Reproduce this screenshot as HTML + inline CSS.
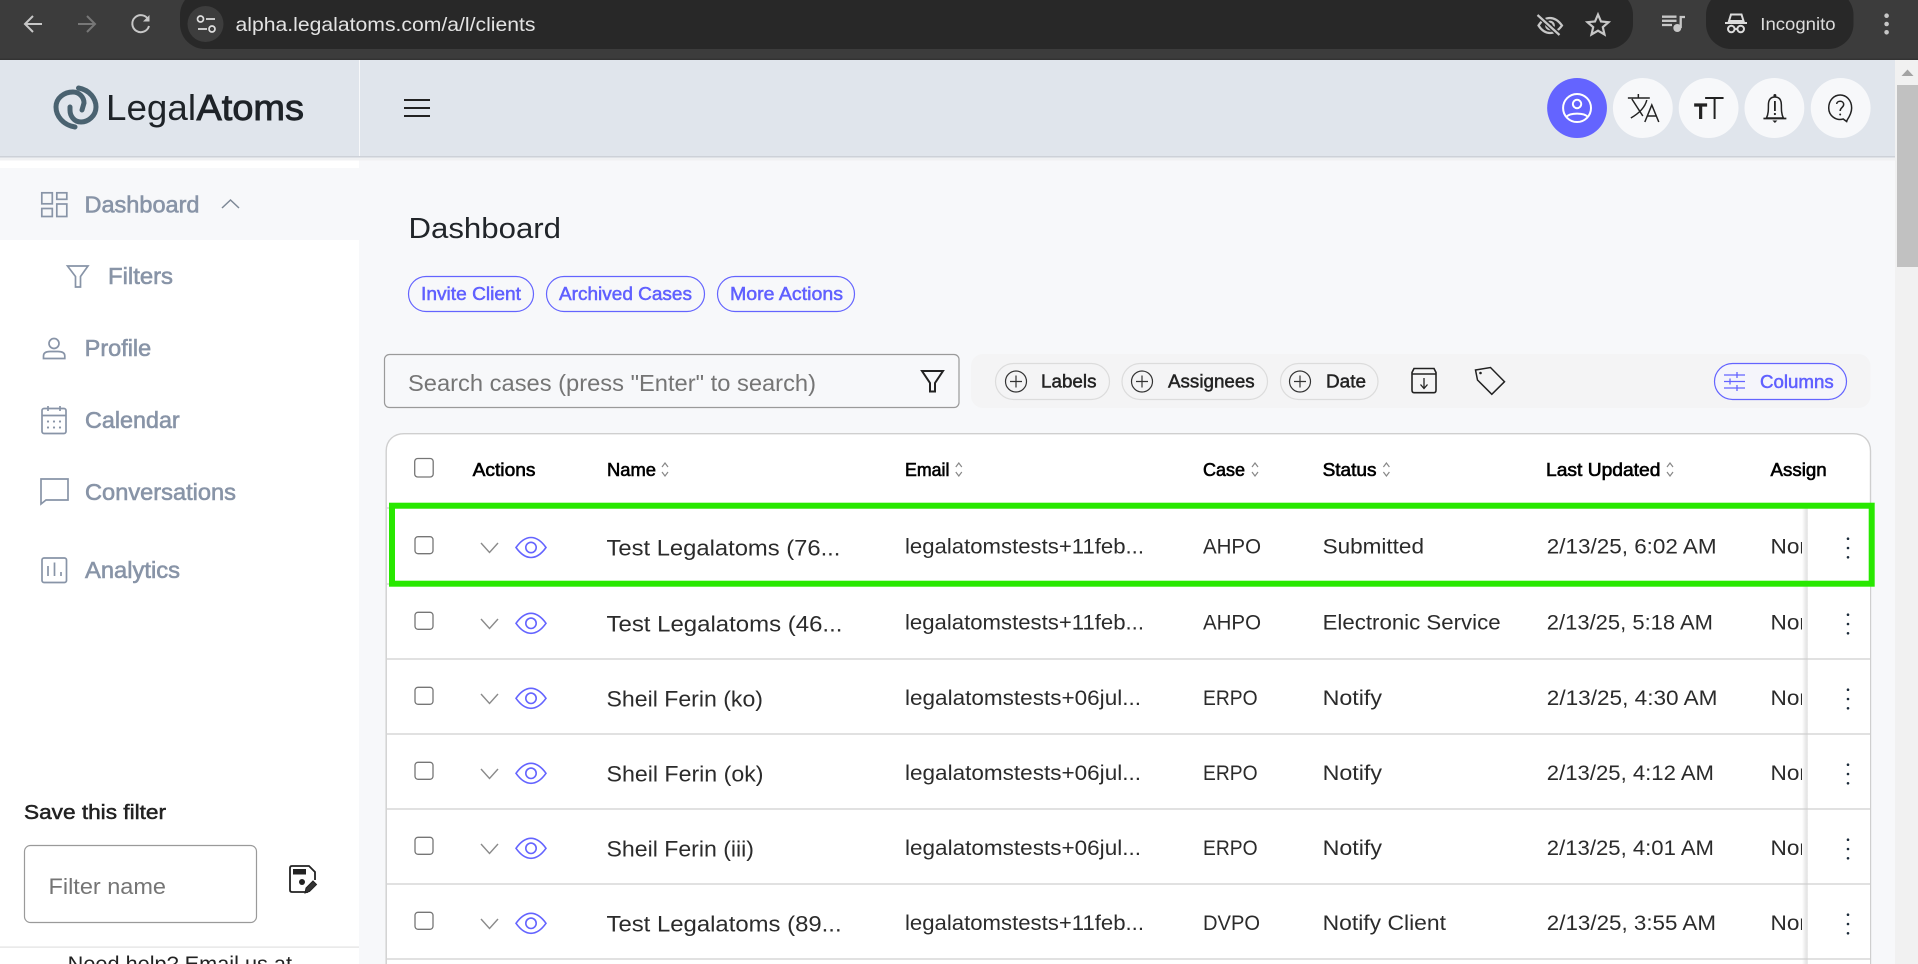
<!DOCTYPE html>
<html lang="en"><head><meta charset="utf-8"><title>LegalAtoms</title>
<style>
html,body{margin:0;padding:0;background:#f7f8fa;width:1918px;height:964px;overflow:hidden}
svg{display:block;font-family:"Liberation Sans",sans-serif}
.nav{font-size:23px;fill:#8894a7;stroke:#8894a7;stroke-width:.6}
.ic{fill:none;stroke:#8894a7;stroke-width:1.7}
.hd{font-size:18px;fill:#000;stroke:#000;stroke-width:.6}
.nm{font-size:22.5px;fill:#2b2b2b}
.tx{font-size:21px;fill:#2b2b2b}
.pu{font-size:18px;fill:#6060ff;stroke:#6060ff;stroke-width:.5}
.ch{font-size:18px;fill:#222;stroke:#222;stroke-width:.45}
.cb{fill:#fff;stroke:#767676;stroke-width:1.3}
.ln{stroke:#cfcfcf;stroke-width:1.3}
.srt{fill:none;stroke:#888;stroke-width:1.2}
.br{fill:none;stroke:#c7c7c7;stroke-width:2}
.k{fill:#1c2b3a}
</style></head><body>
<svg xmlns="http://www.w3.org/2000/svg" width="1918" height="964" viewBox="0 0 1918 964">
<defs>
<linearGradient id="sg" x1="0" x2="1" y1="0" y2="0"><stop offset="0" stop-color="#fff"/><stop offset=".75" stop-color="#e4e4e4"/><stop offset="1" stop-color="#ececec"/></linearGradient>
<g id="eye"><path d="M-15 0C-10-7-5-10 0-10C5-10 10-7 15 0C10 7 5 10 0 10C-5 10-10 7-15 0Z" fill="none" stroke="#6464ff" stroke-width="1.6"/><circle r="5.2" fill="none" stroke="#6464ff" stroke-width="1.6"/></g>
<path id="chev" d="M-8.5-5L0 4.5L8.500-5" fill="none" stroke="#8a8a8a" stroke-width="1.4"/>
<path id="sort" d="M-3 5L0 1L3 5M-3 10L0 14L3 10" class="srt"/>
<g id="plus"><circle r="10.5" fill="none" stroke="#333" stroke-width="1.2"/><path d="M-6 0H6M0-6V6" stroke="#333" stroke-width="1.2"/></g>
<g id="keb"><circle cy="-9.300" r="1.300" class="k"/><circle r="1.300" class="k"/><circle cy="9.300" r="1.300" class="k"/></g>
</defs>

<!-- browser chrome -->
<rect width="1918" height="60" fill="#3c3c3c"/>
<rect y="58.500" width="1918" height="1.500" fill="#333"/>
<rect x="180" y="-10" width="1453" height="59" rx="25" fill="#282828"/>
<path d="M42 24H25M33 16L25 24L33 32" class="br" stroke-width="2"/>
<path d="M78 24H95M87 16L95 24L87 32" fill="none" stroke="#777" stroke-width="2"/>
<path d="M148.500 20A8.500 8.500 0 1 0 149 26" class="br"/><path d="M149.500 15V21.500H143Z" fill="#c7c7c7"/>
<circle cx="205.500" cy="24" r="18" fill="#3d3d3d"/>
<circle cx="200.500" cy="19" r="3" fill="none" stroke="#dedede" stroke-width="1.700"/><path d="M206 19H215M198 29H207" stroke="#dedede" stroke-width="1.700"/><circle cx="212" cy="29" r="3" fill="none" stroke="#dedede" stroke-width="1.700"/>
<text x="235.500" y="31" font-size="19.500" fill="#e3e3e3" textLength="300" lengthAdjust="spacingAndGlyphs">alpha.legalatoms.com/a/l/clients</text>
<path d="M1538.500 25.500C1542 20 1546 18 1550 18C1554 18 1558 20 1562 25.500C1558 31 1554 33 1550 33C1546 33 1542 31 1538.500 25.500Z" fill="none" stroke="#c7c7c7" stroke-width="2.200"/><circle cx="1550" cy="25.500" r="3.800" fill="none" stroke="#c7c7c7" stroke-width="2.200"/><path d="M1538 15L1559.500 35" stroke="#282828" stroke-width="5"/><path d="M1537.500 15L1559.500 35" stroke="#c7c7c7" stroke-width="2.200"/>
<path d="M1598 14.500L1601 21.500L1608.500 22.200L1602.800 27.200L1604.500 34.500L1598 30.700L1591.500 34.500L1593.200 27.200L1587.500 22.200L1595 21.500Z" fill="none" stroke="#c7c7c7" stroke-width="2.200"/>
<path d="M1662 16.700H1676.500M1662 20.800H1676.500M1662 25H1672" stroke="#c7c7c7" stroke-width="2.300"/><path d="M1680.700 28V17H1685" fill="none" stroke="#c7c7c7" stroke-width="2.300"/><circle cx="1677.300" cy="28" r="4" fill="#c7c7c7"/>
<rect x="1706" y="-10" width="147.500" height="59" rx="25" fill="#282828"/>
<path d="M1731 14.500H1741.500L1743.500 21H1729ZM1725 23H1747" fill="none" stroke="#dcdcdc" stroke-width="2"/><circle cx="1731.300" cy="29" r="3.300" fill="none" stroke="#dcdcdc" stroke-width="2"/><circle cx="1740.700" cy="29" r="3.300" fill="none" stroke="#dcdcdc" stroke-width="2"/><path d="M1734.500 29H1737.500" stroke="#dcdcdc" stroke-width="2"/>
<text x="1760.300" y="30" font-size="17.500" fill="#dcdcdc" textLength="75.300" lengthAdjust="spacingAndGlyphs">Incognito</text>
<circle cx="1886.600" cy="15.700" r="2.300" fill="#c7c7c7"/><circle cx="1886.600" cy="24" r="2.300" fill="#c7c7c7"/><circle cx="1886.600" cy="32.300" r="2.300" fill="#c7c7c7"/>

<!-- backgrounds -->
<rect y="60" width="1895" height="904" fill="#f7f8fa"/>
<rect y="157" width="359" height="807" fill="#fff"/>
<rect y="168" width="359" height="72" fill="#f7f8fa"/>
<rect y="60" width="1895" height="96.500" fill="#e0e5ec"/>
<rect y="156" width="1895" height="1.500" fill="#cdd1d8"/>
<rect y="157.500" width="1895" height="3" fill="#f0f1f3"/>
<rect x="359" y="60" width="1" height="96" fill="#f7f8fa"/>
<rect x="1895" y="60" width="23" height="904" fill="#f1f1f1"/>
<rect x="1897" y="85" width="21" height="182" fill="#c1c1c1"/>
<path d="M1901.500 76L1907.500 69.500L1913.500 76Z" fill="#a3a3a3"/>

<!-- logo -->
<path d="M78.500 88C90 90 96 99 96 107C96 116 88 122 81 122C74 122 70 116 70 110L70 107" fill="none" stroke="#4a6270" stroke-width="5" stroke-linecap="round"/>
<path d="M75 127C63 125 56 116 56 107C56 98 64 92 73 92C79 92 84 97 84 103L82 110" fill="none" stroke="#4a6270" stroke-width="5" stroke-linecap="round"/>
<text x="106" y="120" font-size="36" fill="#1e2328" textLength="90" lengthAdjust="spacingAndGlyphs">Legal</text>
<text x="196.500" y="120" font-size="36" fill="#1e2328" stroke="#1e2328" stroke-width=".9" textLength="107.500" lengthAdjust="spacingAndGlyphs">Atoms</text>
<path d="M404 100H430M404 108H430M404 116H430" stroke="#222" stroke-width="2"/>

<!-- header round buttons -->
<g transform="matrix(.99675 0 0 1 4.170 0)">
<circle cx="1578" cy="108" r="30" fill="#6464ff"/>
<circle cx="1644" cy="108" r="30" fill="#f7f8fa"/><circle cx="1710" cy="108" r="30" fill="#f7f8fa"/><circle cx="1776" cy="108" r="30" fill="#f7f8fa"/><circle cx="1842.500" cy="108" r="30" fill="#f7f8fa"/>
<circle cx="1578" cy="108" r="14" fill="none" stroke="#fff" stroke-width="2"/><circle cx="1578" cy="104" r="4.200" fill="none" stroke="#fff" stroke-width="2"/><path d="M1567 117C1571 112.500 1585 112.500 1589 117" fill="none" stroke="#fff" stroke-width="2"/>
<path d="M1629 98H1651M1639.500 94V98M1633 99L1644 116M1648 100C1646 108 1639 114 1632 118M1646 122L1653 105L1660 122M1648.500 116H1657.500" fill="none" stroke="#222" stroke-width="1.500"/>
<path d="M1695.500 105H1708.500M1702 105V119" fill="none" stroke="#222" stroke-width="3.200"/>
<path d="M1706.500 98H1725M1716 98V119" fill="none" stroke="#222" stroke-width="2"/>
<path d="M1768 118C1770 114 1770 110 1770 105C1770 100 1772 97 1776.500 97C1781 97 1783 100 1783 105C1783 110 1783 114 1785 118Z" fill="none" stroke="#222" stroke-width="1.500"/>
<path d="M1765 118.500H1788" stroke="#222" stroke-width="1.700"/><path d="M1776.500 101V111" stroke="#222" stroke-width="1.800"/><circle cx="1776.500" cy="114" r="1.100" fill="#222"/><circle cx="1776.500" cy="95.500" r="1.500" fill="#222"/><path d="M1774 120.500H1779L1776.500 123Z" fill="#222"/>
<path d="M1845 119C1838 121 1830.500 116 1830.500 108C1830.500 100 1836 95 1842 95C1848 95 1853.500 100 1853.500 108C1853.500 113 1851 117 1849 120L1848.500 121.500L1845 119Z" fill="none" stroke="#222" stroke-width="1.500"/>
<path d="M1838.500 104C1838.500 100.500 1845.500 100 1845.500 104.500C1845.500 107.500 1842 107.500 1842 111" fill="none" stroke="#222" stroke-width="1.500"/><circle cx="1842" cy="114.500" r="1" fill="#222"/>
</g>

<!-- sidebar -->
<g class="ic"><rect x="41.800" y="192.800" width="10.500" height="11"/><rect x="56.800" y="192.800" width="10" height="6.500"/><rect x="41.800" y="208.500" width="10.500" height="8"/><rect x="56.800" y="204" width="10" height="12.500"/></g>
<text class="nav" x="84.500" y="212.500" textLength="115" lengthAdjust="spacingAndGlyphs">Dashboard</text>
<path d="M222 208L230.500 200L239 208" fill="none" stroke="#7d8896" stroke-width="1.500"/>
<path d="M67.500 266H88L80.500 276.500V287H75.500V276.500Z" class="ic" stroke-width="1.900"/>
<text class="nav" x="108" y="284" textLength="65" lengthAdjust="spacingAndGlyphs">Filters</text>
<circle cx="54" cy="343.500" r="5" class="ic"/><path d="M43.500 358.500V356C43.500 352.500 46.500 351.500 50 351.500H58C61.500 351.500 64.800 352.500 64.800 356V358.500Z" class="ic"/>
<text class="nav" x="84.700" y="356" textLength="66.500" lengthAdjust="spacingAndGlyphs">Profile</text>
<rect x="42" y="408.500" width="24" height="25" rx="2" class="ic"/><path d="M42 415.500H66M48 406V411M60 406V411" class="ic"/>
<g fill="#8894a7"><circle cx="48" cy="421.500" r="1.100"/><circle cx="54" cy="421.500" r="1.100"/><circle cx="60" cy="421.500" r="1.100"/><circle cx="48" cy="427.500" r="1.100"/><circle cx="54" cy="427.500" r="1.100"/><circle cx="60" cy="427.500" r="1.100"/></g>
<text class="nav" x="85" y="428" textLength="94.700" lengthAdjust="spacingAndGlyphs">Calendar</text>
<path d="M41 479H68V500H46L41 504Z" class="ic"/>
<text class="nav" x="85" y="500" textLength="151" lengthAdjust="spacingAndGlyphs">Conversations</text>
<rect x="42" y="558" width="24.500" height="24.500" rx="2" class="ic"/><path d="M48 566V576M54.500 562.500V576M61 572V576" class="ic"/>
<text class="nav" x="85" y="578" textLength="95" lengthAdjust="spacingAndGlyphs">Analytics</text>
<text x="24" y="819" font-size="20" fill="#222" stroke="#222" stroke-width=".5" textLength="142" lengthAdjust="spacingAndGlyphs">Save this filter</text>
<rect x="24.500" y="845.500" width="232" height="77" rx="6" fill="#fff" stroke="#9a9a9a" stroke-width="1.200"/>
<text x="48.500" y="894" font-size="22.500" fill="#757575" textLength="117.500" lengthAdjust="spacingAndGlyphs">Filter name</text>
<path d="M308 892H292C290.500 892 290 891 290 890V868C290 867 290.500 866 292 866H309L315 872V880" fill="none" stroke="#222" stroke-width="1.800"/>
<rect x="293" y="869" width="13" height="5.500" fill="#222"/><circle cx="302" cy="882" r="3" fill="#222"/>
<path d="M305 893L306 888L313 881L316.500 884.500L309.500 891.500Z" fill="#333" stroke="#222" stroke-width="1"/>
<rect y="946.500" width="359" height="1.200" fill="#e2e2e2"/>
<text x="67.700" y="971" font-size="21" fill="#222" textLength="224.300" lengthAdjust="spacingAndGlyphs">Need help? Email us at</text>

<!-- main head -->
<text x="408.500" y="238" font-size="29" fill="#212529" textLength="152.500" lengthAdjust="spacingAndGlyphs">Dashboard</text>
<rect x="408.500" y="276.500" width="125" height="35" rx="17.500" fill="none" stroke="#6464ff" stroke-width="1.200"/>
<text class="pu" x="421" y="300" textLength="100" lengthAdjust="spacingAndGlyphs">Invite Client</text>
<rect x="546.500" y="276.500" width="158" height="35" rx="17.500" fill="none" stroke="#6464ff" stroke-width="1.200"/>
<text class="pu" x="559" y="300" textLength="133" lengthAdjust="spacingAndGlyphs">Archived Cases</text>
<rect x="717.500" y="276.500" width="137" height="35" rx="17.500" fill="none" stroke="#6464ff" stroke-width="1.200"/>
<text class="pu" x="730" y="300" textLength="113" lengthAdjust="spacingAndGlyphs">More Actions</text>

<!-- search -->
<rect x="384.500" y="354.500" width="574.500" height="53" rx="5" fill="#f7f8fa" stroke="#9a9a9a" stroke-width="1.200"/>
<text x="408" y="391" font-size="23" fill="#757575" textLength="408" lengthAdjust="spacingAndGlyphs">Search cases (press "Enter" to search)</text>
<path d="M922 371H943L935 383V391.500H930V383Z" fill="none" stroke="#222" stroke-width="2"/>
<rect x="971" y="354" width="899.500" height="54" rx="12" fill="#f4f4f5"/>
<rect x="995.500" y="363.500" width="114" height="36" rx="18" fill="#f4f4f5" stroke="#dcdcdc" stroke-width="1.200"/>
<use href="#plus" x="1016" y="381.500"/>
<text class="ch" x="1041" y="387.700" textLength="55.500" lengthAdjust="spacingAndGlyphs">Labels</text>
<rect x="1122" y="363.500" width="145.500" height="36" rx="18" fill="#f4f4f5" stroke="#dcdcdc" stroke-width="1.200"/>
<use href="#plus" x="1142" y="381.500"/>
<text class="ch" x="1168" y="387.700" textLength="86.700" lengthAdjust="spacingAndGlyphs">Assignees</text>
<rect x="1280.500" y="363.500" width="97.500" height="36" rx="18" fill="#f4f4f5" stroke="#dcdcdc" stroke-width="1.200"/>
<use href="#plus" x="1300" y="381.500"/>
<text class="ch" x="1326" y="387.700" textLength="40" lengthAdjust="spacingAndGlyphs">Date</text>
<path d="M1414 368.500H1434L1436 372.500V390C1436 392 1435 392.700 1434 392.700H1414C1413 392.700 1412 392 1412 390V372.500ZM1412 374H1436" fill="none" stroke="#222" stroke-width="1.600"/>
<path d="M1424 378V388M1420.500 384.500L1424 388.500L1427.500 384.500" fill="none" stroke="#222" stroke-width="1.300"/>
<path d="M1475.500 370L1490.500 367.500L1504.500 381.700L1491.800 394.300L1477.500 380Z" fill="none" stroke="#222" stroke-width="1.500"/><circle cx="1480.500" cy="373" r="1.300" fill="#222"/>
<rect x="1714.500" y="363.500" width="132" height="36" rx="18" fill="#f5f5fb" stroke="#6464ff" stroke-width="1.200"/>
<path d="M1724 375H1745M1724 381.500H1745M1724 388H1745M1737 372V378M1730 378.500V384.500M1737 385V391" fill="none" stroke="#6464ff" stroke-width="1.300"/>
<text class="pu" x="1760" y="388" textLength="73.700" lengthAdjust="spacingAndGlyphs">Columns</text>

<!-- table card -->
<path d="M386.200 970V451C386.200 440 394 433.700 404 433.700H1853C1863 433.700 1870.500 440 1870.500 451V970" fill="#fff" stroke="#cfcfcf" stroke-width="1.400"/>
<rect class="cb" x="414.700" y="458.500" width="18.500" height="18.500" rx="3"/>
<text class="hd" x="472.600" y="476" textLength="62.900" lengthAdjust="spacingAndGlyphs">Actions</text>
<text class="hd" x="607" y="476" textLength="49" lengthAdjust="spacingAndGlyphs">Name</text><use href="#sort" x="665" y="462"/>
<text class="hd" x="905" y="476" textLength="44.400" lengthAdjust="spacingAndGlyphs">Email</text><use href="#sort" x="958.800" y="462"/>
<text class="hd" x="1203" y="476" textLength="42" lengthAdjust="spacingAndGlyphs">Case</text><use href="#sort" x="1255" y="462"/>
<text class="hd" x="1322.600" y="476" textLength="53.900" lengthAdjust="spacingAndGlyphs">Status</text><use href="#sort" x="1386.400" y="462"/>
<text class="hd" x="1546" y="476" textLength="114.400" lengthAdjust="spacingAndGlyphs">Last Updated</text><use href="#sort" x="1670" y="462"/>
<text class="hd" x="1770.500" y="476" textLength="56.200" lengthAdjust="spacingAndGlyphs">Assign</text>

<!-- rows -->
<rect class="cb" x="415" y="536.700" width="18" height="17" rx="3"/><use href="#chev" x="489.500" y="548"/><use href="#eye" x="531" y="547.500"/>
<text class="nm" x="606.500" y="555.300" textLength="233.900" lengthAdjust="spacingAndGlyphs">Test Legalatoms (76...</text>
<text class="tx" x="905" y="553.500" textLength="239" lengthAdjust="spacingAndGlyphs">legalatomstests+11feb...</text>
<text class="tx" x="1203" y="553.500" textLength="58" lengthAdjust="spacingAndGlyphs">AHPO</text>
<text class="tx" x="1322.600" y="553.500" textLength="101.400" lengthAdjust="spacingAndGlyphs">Submitted</text>
<text class="tx" x="1546.800" y="553.500" textLength="169.800" lengthAdjust="spacingAndGlyphs">2/13/25, 6:02 AM</text>
<text class="tx" x="1770.500" y="553.500" textLength="54" lengthAdjust="spacingAndGlyphs">None</text>

<rect class="cb" x="415" y="612.300" width="18" height="17" rx="3"/><use href="#chev" x="489.500" y="624"/><use href="#eye" x="531" y="623.300"/>
<text class="nm" x="606.500" y="631.300" textLength="235.900" lengthAdjust="spacingAndGlyphs">Test Legalatoms (46...</text>
<text class="tx" x="905" y="629.500" textLength="239" lengthAdjust="spacingAndGlyphs">legalatomstests+11feb...</text>
<text class="tx" x="1203" y="629.500" textLength="58" lengthAdjust="spacingAndGlyphs">AHPO</text>
<text class="tx" x="1322.600" y="629.500" textLength="178" lengthAdjust="spacingAndGlyphs">Electronic Service</text>
<text class="tx" x="1546.800" y="629.500" textLength="166.200" lengthAdjust="spacingAndGlyphs">2/13/25, 5:18 AM</text>
<text class="tx" x="1770.500" y="629.500" textLength="54" lengthAdjust="spacingAndGlyphs">None</text>

<rect class="cb" x="415" y="687.300" width="18" height="17" rx="3"/><use href="#chev" x="489.500" y="699"/><use href="#eye" x="531" y="698.300"/>
<text class="nm" x="606.500" y="706.300" textLength="156.500" lengthAdjust="spacingAndGlyphs">Sheil Ferin (ko)</text>
<text class="tx" x="905" y="705" textLength="236" lengthAdjust="spacingAndGlyphs">legalatomstests+06jul...</text>
<text class="tx" x="1203" y="705" textLength="54.600" lengthAdjust="spacingAndGlyphs">ERPO</text>
<text class="tx" x="1322.600" y="705" textLength="59.400" lengthAdjust="spacingAndGlyphs">Notify</text>
<text class="tx" x="1546.800" y="705" textLength="170.700" lengthAdjust="spacingAndGlyphs">2/13/25, 4:30 AM</text>
<text class="tx" x="1770.500" y="705" textLength="54" lengthAdjust="spacingAndGlyphs">None</text>

<rect class="cb" x="415" y="762.300" width="18" height="17" rx="3"/><use href="#chev" x="489.500" y="774"/><use href="#eye" x="531" y="773.300"/>
<text class="nm" x="606.500" y="781.300" textLength="157" lengthAdjust="spacingAndGlyphs">Sheil Ferin (ok)</text>
<text class="tx" x="905" y="780" textLength="236" lengthAdjust="spacingAndGlyphs">legalatomstests+06jul...</text>
<text class="tx" x="1203" y="780" textLength="54.600" lengthAdjust="spacingAndGlyphs">ERPO</text>
<text class="tx" x="1322.600" y="780" textLength="59.400" lengthAdjust="spacingAndGlyphs">Notify</text>
<text class="tx" x="1546.800" y="780" textLength="167.200" lengthAdjust="spacingAndGlyphs">2/13/25, 4:12 AM</text>
<text class="tx" x="1770.500" y="780" textLength="54" lengthAdjust="spacingAndGlyphs">None</text>

<rect class="cb" x="415" y="837.300" width="18" height="17" rx="3"/><use href="#chev" x="489.500" y="849"/><use href="#eye" x="531" y="848.300"/>
<text class="nm" x="606.500" y="856.300" textLength="147.500" lengthAdjust="spacingAndGlyphs">Sheil Ferin (iii)</text>
<text class="tx" x="905" y="855" textLength="236" lengthAdjust="spacingAndGlyphs">legalatomstests+06jul...</text>
<text class="tx" x="1203" y="855" textLength="54.600" lengthAdjust="spacingAndGlyphs">ERPO</text>
<text class="tx" x="1322.600" y="855" textLength="59.400" lengthAdjust="spacingAndGlyphs">Notify</text>
<text class="tx" x="1546.800" y="855" textLength="167.200" lengthAdjust="spacingAndGlyphs">2/13/25, 4:01 AM</text>
<text class="tx" x="1770.500" y="855" textLength="54" lengthAdjust="spacingAndGlyphs">None</text>

<rect class="cb" x="415" y="912.300" width="18" height="17" rx="3"/><use href="#chev" x="489.500" y="924"/><use href="#eye" x="531" y="923.300"/>
<text class="nm" x="606.500" y="931.300" textLength="235.100" lengthAdjust="spacingAndGlyphs">Test Legalatoms (89...</text>
<text class="tx" x="905" y="930" textLength="239" lengthAdjust="spacingAndGlyphs">legalatomstests+11feb...</text>
<text class="tx" x="1203" y="930" textLength="57" lengthAdjust="spacingAndGlyphs">DVPO</text>
<text class="tx" x="1322.600" y="930" textLength="123.400" lengthAdjust="spacingAndGlyphs">Notify Client</text>
<text class="tx" x="1546.800" y="930" textLength="169.200" lengthAdjust="spacingAndGlyphs">2/13/25, 3:55 AM</text>
<text class="tx" x="1770.500" y="930" textLength="54" lengthAdjust="spacingAndGlyphs">None</text>

<!-- sticky column -->
<rect x="1802" y="508" width="6" height="456" fill="url(#sg)"/>
<rect x="1808" y="508" width="62" height="456" fill="#fff"/>
<path class="ln" d="M387 508H1870M387 584H1870M387 659H1870M387 734H1870M387 809H1870M387 884H1870M387 959H1870"/>
<use href="#keb" x="1848" y="548"/><use href="#keb" x="1848" y="624"/><use href="#keb" x="1848" y="699"/><use href="#keb" x="1848" y="774"/><use href="#keb" x="1848" y="849"/><use href="#keb" x="1848" y="924"/>

<!-- highlight -->
<rect x="392" y="505.700" width="1479.700" height="78" fill="none" stroke="#28e800" stroke-width="6"/>
</svg>
</body></html>
